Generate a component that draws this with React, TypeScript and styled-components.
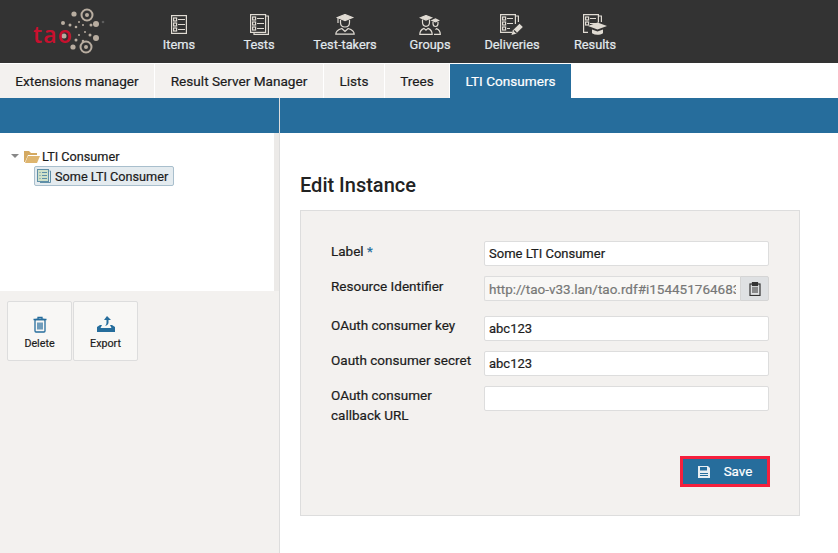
import React from 'react';
import styled, { createGlobalStyle } from 'styled-components';

const GlobalStyle = createGlobalStyle`
  html, body {
    margin: 0;
    padding: 0;
    background: #fff;
    font-family: 'Roboto', 'Liberation Sans', sans-serif;
    color: #1c1c1c;
    -webkit-text-stroke: 0.2px;
  }
`;

const ICON = '#e0dbd3';

const ItemsIcon = () => (
  <svg width="16" height="19" viewBox="0 0 16 19" fill="none" stroke={ICON} strokeWidth="1.2">
    <rect x=".6" y=".6" width="14.800" height="17.800" />
    <rect x="2.600" y="3" width="3" height="3" />
    <rect x="2.600" y="8" width="3" height="3" />
    <rect x="2.600" y="13" width="3" height="3" />
    <path d="M7 4.500h7M7 9.500h7M7 14.500h7" />
  </svg>
);

const TestsIcon = () => (
  <svg width="19" height="21" viewBox="0 0 19 21" fill="none" stroke={ICON} strokeWidth="1.2">
    <path d="M15.500 2h2.900v18.400H4v-1.900" />
    <rect x=".6" y=".6" width="15" height="17.800" />
    <rect x="2.600" y="3" width="3" height="3" />
    <rect x="2.600" y="8" width="3" height="3" />
    <rect x="2.600" y="13" width="3" height="3" />
    <path d="M7 4.500h7M7 9.500h7M7 14.500h7" />
  </svg>
);

const TakerIcon = () => (
  <svg width="20" height="21" viewBox="0 0 20 21" fill="none" stroke={ICON} strokeWidth="1.2">
    <path d="M10 .5l7.500 3-7.500 3-7.500-3z" fill={ICON} />
    <path d="M3 4v5" />
    <path d="M5.500 6v2.500c0 2.800 2 4.500 4.500 4.500s4.500-1.700 4.500-4.500V6" />
    <path d="M.8 20.200c0-2.700 2.700-4.700 6-5.700l3.200 3 3.200-3c3.300 1 6 3 6 5.700z" />
  </svg>
);

const GroupIcon = () => (
  <svg width="22" height="20" viewBox="0 0 22 20" fill="none" stroke={ICON} strokeWidth="1.2">
    <path d="M7 .5l5.500 2.300L7 5 1.500 2.800z" fill={ICON} />
    <path d="M3.500 4.500v2.800c0 2.500 1.500 4 3.500 4s3.500-1.500 3.500-4V4.500" />
    <path d="M.8 19.400c0-3 1.800-5 4.200-6l2 1.800 2-1.800c2.400 1 4.200 3 4.200 6z" />
    <path d="M13 5.500l3.500-1.500 3 1.500-3 1.300z" fill={ICON} />
    <path d="M14 7v1.500c0 2 1.100 3 2.500 3s2.500-1 2.500-3V7" />
    <path d="M15 19.400h6.300c0-3-1.600-4.900-3.800-5.800l-1 1" />
  </svg>
);

const DeliveryIcon = () => (
  <svg width="24" height="22" viewBox="0 0 24 22" fill="none" stroke={ICON} strokeWidth="1.2">
    <path d="M12 18.400H.6V.6h14.800v9.400" />
    <path d="M15.500 2h2.900v6" />
    <rect x="2.600" y="3" width="3" height="3" />
    <rect x="2.600" y="8" width="3" height="3" />
    <rect x="2.600" y="13" width="3" height="3" />
    <path d="M7 4.500h6M7 9.500h6M7 14.500h3" />
    <path d="M11.500 21l1.200-4.500 6.800-6.800 3.300 3.300-6.800 6.800z" fill={ICON} stroke="none" />
    <path d="M14 16.500l2.500 2.500" stroke="#333" />
  </svg>
);

const ResultIcon = () => (
  <svg width="24" height="22" viewBox="0 0 24 22" fill="none" stroke={ICON} strokeWidth="1.2">
    <path d="M5 18.400H.6V.6h14.800v8" />
    <path d="M15.500 2h2.900v6" />
    <rect x="2.600" y="3" width="3" height="3" />
    <rect x="2.600" y="8" width="3" height="3" />
    <path d="M7 4.500h6M7 9.500h6" />
    <path d="M14.500 8.500l9.500 3.500-9.500 3.500L5 12z" fill={ICON} stroke="none" />
    <path d="M9 15.500v3.700c3.500 2 7.500 2 11 0v-3.700l-5.500 2z" fill={ICON} stroke="none" />
  </svg>
);

const Logo = () => (
  <svg width="85" height="52" viewBox="0 0 85 52">
    <g fill="#b8ada0">
      <circle cx="49" cy="9" r="2.600" />
      <circle cx="71" cy="19" r="3" />
      <circle cx="71" cy="33" r="3" />
      <circle cx="48" cy="42" r="2.600" />
      <circle cx="38" cy="18" r="2" />
      <circle cx="45" cy="20" r="1.500" />
      <circle cx="51" cy="22" r="1.300" />
      <circle cx="66" cy="20" r="1.500" />
      <circle cx="65" cy="30" r="1.500" />
      <circle cx="60" cy="27" r="1" />
      <circle cx="51" cy="35" r="1.500" />
      <circle cx="58" cy="36" r="1.300" />
      <circle cx="54" cy="17" r="1" />
      <circle cx="58" cy="20" r="1" />
      <circle cx="54" cy="30" r="1" />
      <circle cx="39" cy="31" r="2.500" />
    </g>
    <g fill="none" stroke="#b8ada0" strokeWidth="2">
      <circle cx="62" cy="10" r="5.500" />
      <circle cx="61" cy="42" r="5.500" />
    </g>
    <circle cx="62" cy="10" r="2" fill="#b8ada0" />
    <circle cx="61" cy="42" r="2" fill="#b8ada0" />
    <circle cx="78" cy="17" r="1.300" fill="#5c5c5c" />
    <text x="8" y="38" fontSize="23" fontWeight="600" fill="#c8102e" fontFamily="'Open Sans', sans-serif" letterSpacing="1.2">tao</text>
  </svg>
);

const TrashIcon = () => (
  <svg width="16" height="17" viewBox="0 0 16 17" fill="none" stroke="#266d9c" strokeWidth="1.3">
    <path d="M1.500 3.500h13M6 3.500V1.500h4v2" />
    <rect x="3" y="3.500" width="10" height="12.500" rx="1" />
    <path d="M6 6.500v7M8 6.500v7M10 6.500v7" />
  </svg>
);

const ExportIcon = () => (
  <svg width="18" height="17" viewBox="0 0 18 17" fill="#266d9c">
    <path d="M10 0l4 4h-2.500v2.500c0 2-1.500 3-3.500 3.500 1-1 1.500-2 1.500-3.500V4H7z" />
    <path d="M0 11l3-2h2l-1.500 3h11L13 9h2l3 2v5H0z" />
  </svg>
);

const ClipboardIcon = () => (
  <svg width="12" height="14" viewBox="0 0 12 14" fill="none" stroke="#333" strokeWidth="1.200">
    <rect x="1" y="2" width="10" height="11.500" />
    <rect x="3.500" y=".5" width="5" height="3" fill="#333" />
    <path d="M3 6h6M3 8h6M3 10h6" />
  </svg>
);

const SaveIcon = () => (
  <svg width="12" height="12" viewBox="0 0 12 12">
    <path d="M0 0h10l2 2v10H0z" fill="#e8eef2" />
    <rect x="2" y="1" width="7" height="3.500" fill="#266d9c" />
    <rect x="2" y="7" width="8" height="1" fill="#266d9c" />
    <rect x="2" y="9" width="8" height="1" fill="#266d9c" />
  </svg>
);

const NAV = [
  { label: 'Items', icon: <ItemsIcon />, width: 80 },
  { label: 'Tests', icon: <TestsIcon />, width: 80 },
  { label: 'Test-takers', icon: <TakerIcon />, width: 92 },
  { label: 'Groups', icon: <GroupIcon />, width: 78 },
  { label: 'Deliveries', icon: <DeliveryIcon />, width: 86 },
  { label: 'Results', icon: <ResultIcon />, width: 80 },
];

const TABS = [
  { label: 'Extensions manager', width: 154 },
  { label: 'Result Server Manager', width: 168 },
  { label: 'Lists', width: 60 },
  { label: 'Trees', width: 64 },
  { label: 'LTI Consumers', width: 121 },
];

export default function App() {
  return (
    <>
      <GlobalStyle />
      <Page>
        <Header>
          <LogoBox>
            <Logo />
          </LogoBox>
          <Nav>
            {NAV.map((n) => (
              <NavItem key={n.label} $width={n.width}>
                <NavIcon>{n.icon}</NavIcon>
                <span>{n.label}</span>
              </NavItem>
            ))}
          </Nav>
        </Header>
        <Tabs>
          {TABS.map((t) => (
            <Tab key={t.label} $width={t.width} $active={t.label === 'LTI Consumers'}>
              {t.label}
            </Tab>
          ))}
        </Tabs>
        <Body>
          <Sidebar>
            <BlueBar />
            <TreeWrap>
              <Tree>
                <TreeRoot>
                  <Caret />
                  <svg width="16" height="13" viewBox="0 0 16 13">
                    <path d="M0 1h5l2 2h6v2H4L1 12H0z" fill="#d4a961" />
                    <path d="M4 6h12l-3 7H1z" fill="#deb56f" />
                  </svg>
                  <span>LTI Consumer</span>
                </TreeRoot>
                <TreeLeaf>
                  <svg width="14" height="14" viewBox="0 0 14 14" fill="none" stroke="#5f8fa8" strokeWidth="1">
                    <path d="M12.500 2h1v11.500H3" />
                    <rect x=".5" y=".5" width="11" height="12" fill="#cfe0c8" />
                    <path d="M2.500 3.500h1M2.500 6.500h1M2.500 9.500h1M5 3.500h5M5 6.500h5M5 9.500h5" />
                  </svg>
                  <span>Some LTI Consumer</span>
                </TreeLeaf>
              </Tree>
              <Scrollbar />
            </TreeWrap>
            <Actions>
              <ActionButton>
                <TrashIcon />
                <span>Delete</span>
              </ActionButton>
              <ActionButton>
                <ExportIcon />
                <span>Export</span>
              </ActionButton>
            </Actions>
          </Sidebar>
          <Main>
            <BlueBar />
            <Content>
              <Title>Edit Instance</Title>
              <FormBox>
                <Row>
                  <Label>
                    Label <Star>*</Star>
                  </Label>
                  <Input defaultValue="Some LTI Consumer" />
                </Row>
                <LooseRow>
                  <Label>Resource Identifier</Label>
                  <Group>
                    <ReadOnly readOnly defaultValue="http://tao-v33.lan/tao.rdf#i15445176468359" />
                    <Addon>
                      <ClipboardIcon />
                    </Addon>
                  </Group>
                </LooseRow>
                <Row>
                  <Label $raised>OAuth consumer key</Label>
                  <Input defaultValue="abc123" />
                </Row>
                <Row>
                  <Label $raised>Oauth consumer secret</Label>
                  <Input defaultValue="abc123" />
                </Row>
                <TallRow>
                  <Label $raised>
                    OAuth consumer
                    <br />
                    callback URL
                  </Label>
                  <Input defaultValue="" />
                </TallRow>
                <Footer>
                  <SaveOutline>
                    <SaveButton>
                      <SaveIcon />
                      <span>Save</span>
                    </SaveButton>
                  </SaveOutline>
                </Footer>
              </FormBox>
            </Content>
          </Main>
        </Body>
      </Page>
    </>
  );
}

const Page = styled.div`
  width: 838px;
  height: 553px;
  overflow: hidden;
  display: flex;
  flex-direction: column;
`;

const Header = styled.header`
  height: 63px;
  background: #333;
  display: flex;
  flex: none;
`;

const LogoBox = styled.div`
  width: 139px;
  padding: 5px 0 0 25px;
  box-sizing: border-box;
  -webkit-text-stroke: 0;
`;

const Nav = styled.nav`
  display: flex;
`;

const NavItem = styled.div<{ $width: number }>`
  width: ${({ $width }) => $width}px;
  display: flex;
  flex-direction: column;
  align-items: center;
  color: #e3eaee;
  font-size: 12.8px;
  font-weight: 400;
  line-height: 15px;
  padding-top: 12px;
  box-sizing: border-box;
`;

const NavIcon = styled.div`
  height: 25px;
  display: flex;
  align-items: center;
  justify-content: center;
`;

const Tabs = styled.div`
  height: 34px;
  margin-top: 1px;
  display: flex;
  flex: none;
`;

const Tab = styled.div<{ $active?: boolean; $width: number }>`
  width: ${({ $width }) => $width}px;
  display: flex;
  align-items: center;
  justify-content: center;
  font-size: 13.6px;
  font-weight: 400;
  margin-right: 1px;
  background: ${({ $active }) => ($active ? '#266d9c' : '#f3f1ef')};
  color: ${({ $active }) => ($active ? '#fff' : '#1c1c1c')};
`;

const Body = styled.div`
  flex: 1;
  display: flex;
  min-height: 0;
`;

const Sidebar = styled.aside`
  width: 279px;
  flex: none;
  background: #f3f1ef;
  display: flex;
  flex-direction: column;
`;

const BlueBar = styled.div`
  height: 35px;
  background: #266d9c;
  flex: none;
`;

const TreeWrap = styled.div`
  height: 158px;
  display: flex;
  flex: none;
`;

const Tree = styled.div`
  flex: 1;
  background: #fff;
  padding-top: 14px;
  font-size: 12.7px;
  font-weight: 400;
`;

const Scrollbar = styled.div`
  width: 5px;
  background: #eceae8;
`;

const TreeRoot = styled.div`
  display: flex;
  align-items: center;
  gap: 2px;
  height: 18px;
  padding-left: 11px;
`;

const Caret = styled.span`
  width: 0;
  height: 0;
  border-left: 4px solid transparent;
  border-right: 4px solid transparent;
  border-top: 4px solid #888;
  margin-right: 3px;
`;

const TreeLeaf = styled.div`
  display: inline-flex;
  align-items: center;
  gap: 4px;
  height: 18px;
  margin: 1px 0 0 34px;
  padding: 0 5px 0 2px;
  background: #e4ebef;
  border: 1px solid #a9bfcd;
  border-radius: 2px;
`;

const Actions = styled.div`
  display: flex;
  gap: 1px;
  padding: 10px 0 0 7px;
`;

const ActionButton = styled.div`
  width: 65px;
  height: 60px;
  box-sizing: border-box;
  background: #f8f7f5;
  border: 1px solid #ddd;
  border-radius: 2px;
  display: flex;
  flex-direction: column;
  align-items: center;
  justify-content: center;
  gap: 4px;
  padding-top: 4px;
  font-size: 10.7px;
  font-weight: 400;
`;

const Main = styled.main`
  flex: 1;
  display: flex;
  flex-direction: column;
  border-left: 1px solid #ddd;
  min-width: 0;
`;

const Content = styled.div`
  padding: 42px 38px 0 20px;
`;

const Title = styled.h2`
  margin: 0 0 14px;
  font-size: 20px;
  line-height: 21px;
  font-weight: 500;
  color: #222;
  -webkit-text-stroke: 0;
`;

const FormBox = styled.div`
  box-sizing: border-box;
  height: 306px;
  background: #f3f1ef;
  border: 1px solid #ddd;
  padding: 30px 30px 0 30px;
  display: flex;
  flex-direction: column;
`;

const Row = styled.div`
  display: flex;
  height: 35px;
`;

const LooseRow = styled(Row)`
  height: 40px;
`;

const TallRow = styled(Row)`
  height: 60px;
`;

const Label = styled.label<{ $raised?: boolean }>`
  width: 153px;
  flex: none;
  font-size: 13.5px;
  font-weight: 400;
  line-height: 20px;
  margin-top: ${({ $raised }) => ($raised ? '-1px' : '0')};
`;

const Star = styled.span`
  color: #266d9c;
`;

const Input = styled.input`
  box-sizing: border-box;
  width: 285px;
  height: 25px;
  border: 1px solid #ddd;
  border-radius: 2px;
  background: #fff;
  padding: 0 4px;
  font: 400 13px 'Roboto', sans-serif;
  color: #1c1c1c;
  outline: none;
`;

const Group = styled.div`
  display: flex;
  width: 285px;
  height: 25px;
`;

const ReadOnly = styled(Input)`
  flex: 1;
  width: auto;
  min-width: 0;
  background: #f8f7f5;
  color: #777;
  font-size: 13.5px;
  border-right: none;
  border-radius: 2px 0 0 2px;
`;

const Addon = styled.div`
  width: 29px;
  background: #dfe1e3;
  border: 1px solid #d5d5d5;
  box-sizing: border-box;
  border-radius: 0 2px 2px 0;
  display: flex;
  align-items: center;
  justify-content: center;
`;

const Footer = styled.div`
  display: flex;
  justify-content: flex-end;
  margin-right: -1px;
  padding: 10px 0 0;
`;

const SaveOutline = styled.div`
  border: 3px solid #f5203d;
`;

const SaveButton = styled.div`
  width: 84px;
  height: 25px;
  background: #266d9c;
  color: #fff;
  display: flex;
  align-items: center;
  justify-content: center;
  gap: 14px;
  font-size: 13.4px;
  font-weight: 400;
`;
